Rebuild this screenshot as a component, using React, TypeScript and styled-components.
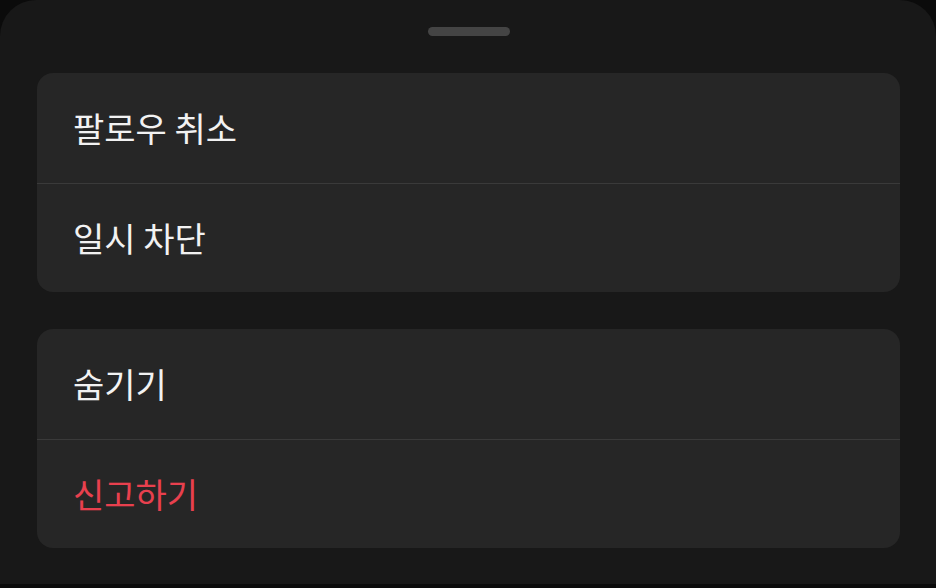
import React from 'react';
import styled, { createGlobalStyle } from 'styled-components';

const GlobalStyle = createGlobalStyle`
  html, body {
    margin: 0;
    padding: 0;
    background: #0b0b0b;
  }
  body {
    font-family: "Noto Sans CJK KR", "Noto Sans", sans-serif;
  }
`;

const Sheet = styled.div`
  width: 936px;
  height: 584px;
  box-sizing: border-box;
  background-color: #181818;
  border-radius: 36px 36px 0 0;
  padding: 27px 36px 0 37px;
  display: flex;
  flex-direction: column;
  align-items: stretch;
`;

const Handle = styled.div`
  align-self: center;
  width: 82px;
  height: 9px;
  border-radius: 5px;
  background-color: #444444;
  margin-bottom: 37px;
`;

const Group = styled.div`
  background-color: #262626;
  border-radius: 16px;
  overflow: hidden;
  display: flex;
  flex-direction: column;

  & + & {
    margin-top: 37px;
  }
`;

const Item = styled.button<{ danger?: boolean }>`
  all: unset;
  box-sizing: border-box;
  height: 109.5px;
  display: flex;
  align-items: center;
  padding-left: 36px;
  font-family: "Noto Sans CJK KR", "Noto Sans", sans-serif;
  font-size: 34px;
  color: ${(props) => (props.danger ? '#e8404e' : '#f2f2f2')};
  cursor: pointer;

  & + & {
    border-top: 1px solid #3a3a3a;
  }
`;

const groups = [
  [{ label: '팔로우 취소' }, { label: '일시 차단' }],
  [{ label: '숨기기' }, { label: '신고하기', danger: true }],
];

const App = () => {
  return (
    <>
      <GlobalStyle />
      <Sheet>
        <Handle />
        {groups.map((items, i) => (
          <Group key={i}>
            {items.map((item) => (
              <Item key={item.label} danger={item.danger}>
                {item.label}
              </Item>
            ))}
          </Group>
        ))}
      </Sheet>
    </>
  );
};

export default App;
